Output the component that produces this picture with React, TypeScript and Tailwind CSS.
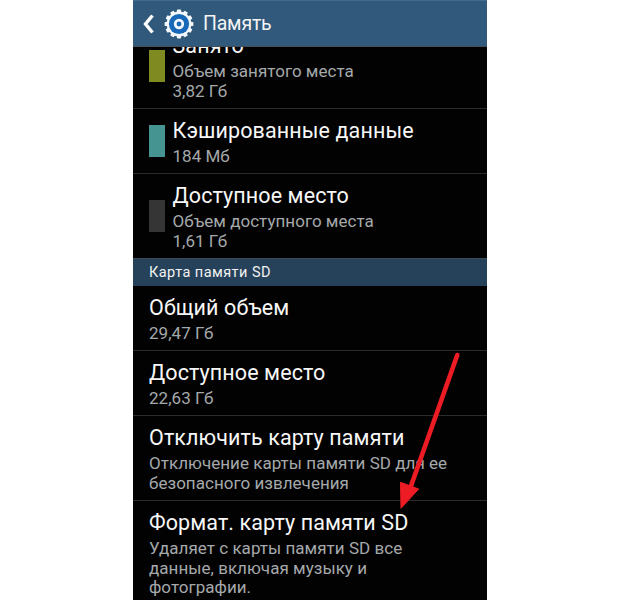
const teeth = [0, 30, 60, 90, 120, 150, 180, 210, 240, 270, 300, 330];

function GearIcon() {
  return (
    <svg className="ml-[9px] size-[30px] shrink-0" viewBox="0 0 30 30">
      <g fill="#f4f8fa">
        {teeth.map((a) => (
          <rect key={a} x="12.9" y="0.6" width="4.2" height="5" rx="0.8" transform={`rotate(${a} 15 15)`} />
        ))}
        <circle cx="15" cy="15" r="12.4" />
      </g>
      <circle cx="15" cy="15" r="10.1" fill="#1769b8" />
      <circle cx="15" cy="15" r="3.8" fill="none" stroke="#f4f8fa" strokeWidth="2.7" />
    </svg>
  );
}

type RowProps = {
  title: string;
  lines: string[];
  height: string;
  swatch?: string;
  last?: boolean;
};

function Row({ title, lines, height, swatch, last }: RowProps) {
  return (
    <div
      className={`flex shrink-0 items-center pl-4 ${height} ${last ? "" : "border-b border-[#2b2b2b]"}`}
    >
      {swatch && <div className={`mr-[7.5px] h-8 w-4 shrink-0 ${swatch}`} />}
      <div className="h-full pt-[9px] whitespace-nowrap">
        <div className="text-[21.5px] leading-[26px] tracking-[0.1px] text-[#f7f7f7]">{title}</div>
        <div className="pt-[3px] text-[17px] leading-[19.6px] tracking-[0.03px] text-[#a5a9ab]">
          {lines.map((l) => (
            <div key={l}>{l}</div>
          ))}
        </div>
      </div>
    </div>
  );
}

export default function App() {
  return (
    <div className="flex h-[600px] w-[620px] justify-center overflow-hidden bg-white font-[Roboto,sans-serif]">
      <div className="relative flex h-full w-[354px] flex-col overflow-hidden bg-[#020202]">
        <header className="flex h-[47px] shrink-0 items-center border-t border-b border-t-[#416c8d] border-b-[#42505b] bg-[#30597b] pl-[10px]">
          <svg className="h-[20px] w-[12px] shrink-0" viewBox="0 0 12 20">
            <path d="M9.5 1.5 2.5 10l7 8.5" fill="none" stroke="#fff" strokeWidth="3.4" />
          </svg>
          <GearIcon />
          <h1 className="ml-[9px] text-[19.5px] leading-6 tracking-[-0.2px] text-[#f4f4f4]">Память</h1>
        </header>
        <div className="flex h-[62px] shrink-0 flex-col justify-end overflow-hidden">
          <Row height="h-[85px]" swatch="bg-[#7f8b20]" title="Занято" lines={["Объем занятого места", "3,82 Гб"]} />
        </div>
        <Row height="h-[65px]" swatch="bg-[#469492]" title="Кэшированные данные" lines={["184 Мб"]} />
        <Row height="h-[84px]" swatch="bg-[#353535]" title="Доступное место" lines={["Объем доступного места", "1,61 Гб"]} last />
        <div className="flex h-7 shrink-0 items-center border-t border-[#3b4c5b] bg-[#26425b] pt-px pl-4 text-[14.5px] tracking-[0.45px] text-[#f2f2f2]">
          Карта памяти SD
        </div>
        <Row height="h-[65px]" title="Общий объем" lines={["29,47 Гб"]} />
        <Row height="h-[65px]" title="Доступное место" lines={["22,63 Гб"]} />
        <Row
          height="h-[85px]"
          title="Отключить карту памяти"
          lines={["Отключение карты памяти SD для ее", "безопасного извлечения"]}
        />
        <Row
          height="h-[104px]"
          title="Формат. карту памяти SD"
          lines={["Удаляет с карты памяти SD все", "данные, включая музыку и", "фотографии."]}
          last
        />
        <svg className="absolute top-[345px] left-[257px] h-[170px] w-[80px]" viewBox="390 345 80 170">
          <path d="M457.3 355 411 486" stroke="#ed1c24" strokeWidth="4.6" strokeLinecap="round" />
          <path d="M401 508.3 400.5 482.3 418.7 489Z" fill="#ed1c24" stroke="#ed1c24" strokeLinejoin="round" />
        </svg>
      </div>
    </div>
  );
}
